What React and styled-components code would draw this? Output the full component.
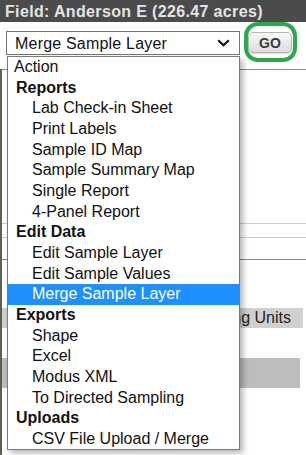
import React from 'react';
import styled, { createGlobalStyle } from 'styled-components';

const menu = [
  { label: 'Action', kind: 'top' },
  { label: 'Reports', kind: 'group' },
  { label: 'Lab Check-in Sheet' },
  { label: 'Print Labels' },
  { label: 'Sample ID Map' },
  { label: 'Sample Summary Map' },
  { label: 'Single Report' },
  { label: '4-Panel Report' },
  { label: 'Edit Data', kind: 'group' },
  { label: 'Edit Sample Layer' },
  { label: 'Edit Sample Values' },
  { label: 'Merge Sample Layer', selected: true },
  { label: 'Exports', kind: 'group' },
  { label: 'Shape' },
  { label: 'Excel' },
  { label: 'Modus XML' },
  { label: 'To Directed Sampling' },
  { label: 'Uploads', kind: 'group' },
  { label: 'CSV File Upload / Merge' },
];

const App = () => {
  return (
    <Page>
      <GlobalStyle />
      <Header>Field: Anderson E (226.47 acres)</Header>
      <Main>
        <Toolbar>
          <Select>
            <span>Merge Sample Layer</span>
            <svg width="13" height="8" viewBox="0 0 13 8">
              <path d="M1.2 1.2 L6.5 6.3 L11.8 1.2" fill="none" stroke="#111" strokeWidth="2.2" />
            </svg>
          </Select>
          <GoWrap>
            <GoButton>GO</GoButton>
            <Ring />
          </GoWrap>
        </Toolbar>
        <Backdrop>
          <Rule $gap={15} $tone="#8c8c8c" />
          <Rule $gap={154} $tone="#cfcfcf" />
          <Rule $gap={14} $tone="#cfcfcf" />
          <Rule $gap={22} $tone="#8a8a8a" />
          <Band $gap={48}>Sampling Units</Band>
          <DarkBand />
        </Backdrop>
        <List>
          {menu.map((item) => (
            <Option key={item.label} $kind={item.kind} $selected={item.selected}>
              {item.label}
            </Option>
          ))}
        </List>
      </Main>
    </Page>
  );
};

export default App;

const GlobalStyle = createGlobalStyle`
  html, body {
    margin: 0;
    padding: 0;
    background: #fff;
  }
  body {
    font-family: "Liberation Sans", Arial, sans-serif;
  }
`;

const Page = styled.div`
  width: 306px;
  height: 455px;
  overflow: hidden;
  background: #fff;
`;

const Header = styled.div`
  height: 22px;
  line-height: 23px;
  padding-left: 5px;
  background: #4b4b4b;
  color: #e4e4e4;
  font-size: 16px;
  font-weight: bold;
  letter-spacing: 0.35px;
  white-space: nowrap;
`;

const Main = styled.div`
  position: relative;
`;

const Toolbar = styled.div`
  display: flex;
  align-items: flex-start;
  padding: 9px 0 0 6px;
`;

const Select = styled.div`
  box-sizing: border-box;
  width: 234px;
  height: 24px;
  border: 1px solid #767676;
  background: #fff;
  display: flex;
  align-items: center;
  justify-content: space-between;
  padding: 0 9px 0 8px;
  font-size: 16px;
  letter-spacing: 0.2px;
  color: #111;
  span {
    padding-top: 1px;
  }
`;

const GoWrap = styled.div`
  position: relative;
  margin: 1px 0 0 8px;
`;

const GoButton = styled.div`
  box-sizing: border-box;
  width: 44px;
  height: 21px;
  border: 1px solid #b5b5b5;
  border-radius: 5px;
  background: linear-gradient(#fafafa, #dcdcdc);
  box-shadow: 0 1px 1px rgba(0, 0, 0, 0.15);
  display: flex;
  align-items: center;
  justify-content: center;
  font-size: 14px;
  font-weight: bold;
  color: #3a3a3a;
`;

const Ring = styled.div`
  position: absolute;
  left: -4px;
  top: -10px;
  width: 53px;
  height: 40px;
  box-sizing: border-box;
  border: 4px solid #2aa84a;
  border-radius: 14px;
`;

const Backdrop = styled.div`
  border-left: 2px solid #56634f;
  height: 400px;
`;

const Rule = styled.div`
  margin-top: ${(p) => p.$gap - 1}px;
  border-top: 1px solid ${(p) => p.$tone};
`;

const Band = styled.div`
  margin-top: ${(p) => p.$gap}px;
  width: 301px;
  height: 20px;
  background: #d0d0d0;
  display: flex;
  align-items: center;
  justify-content: flex-end;
  padding-right: 12px;
  box-sizing: border-box;
  font-size: 16px;
  color: #222;
`;

const DarkBand = styled.div`
  margin-top: 30px;
  width: 298px;
  height: 30px;
  background: #bdbdbd;
`;

const List = styled.div`
  position: absolute;
  left: 7px;
  top: 34px;
  width: 233px;
  box-sizing: border-box;
  border: 1px solid #7a7a7a;
  background: #fff;
  box-shadow: 3px 3px 6px rgba(0, 0, 0, 0.3);
`;

const Option = styled.div`
  height: 20.67px;
  line-height: 20.67px;
  font-size: 16px;
  white-space: nowrap;
  padding-left: ${(p) => (p.$kind === 'top' ? 6 : p.$kind === 'group' ? 8 : 24)}px;
  font-weight: ${(p) => (p.$kind === 'group' ? 'bold' : 'normal')};
  color: ${(p) => (p.$selected ? '#fff' : '#111')};
  background: ${(p) => (p.$selected ? '#1e90ff' : 'transparent')};
`;
